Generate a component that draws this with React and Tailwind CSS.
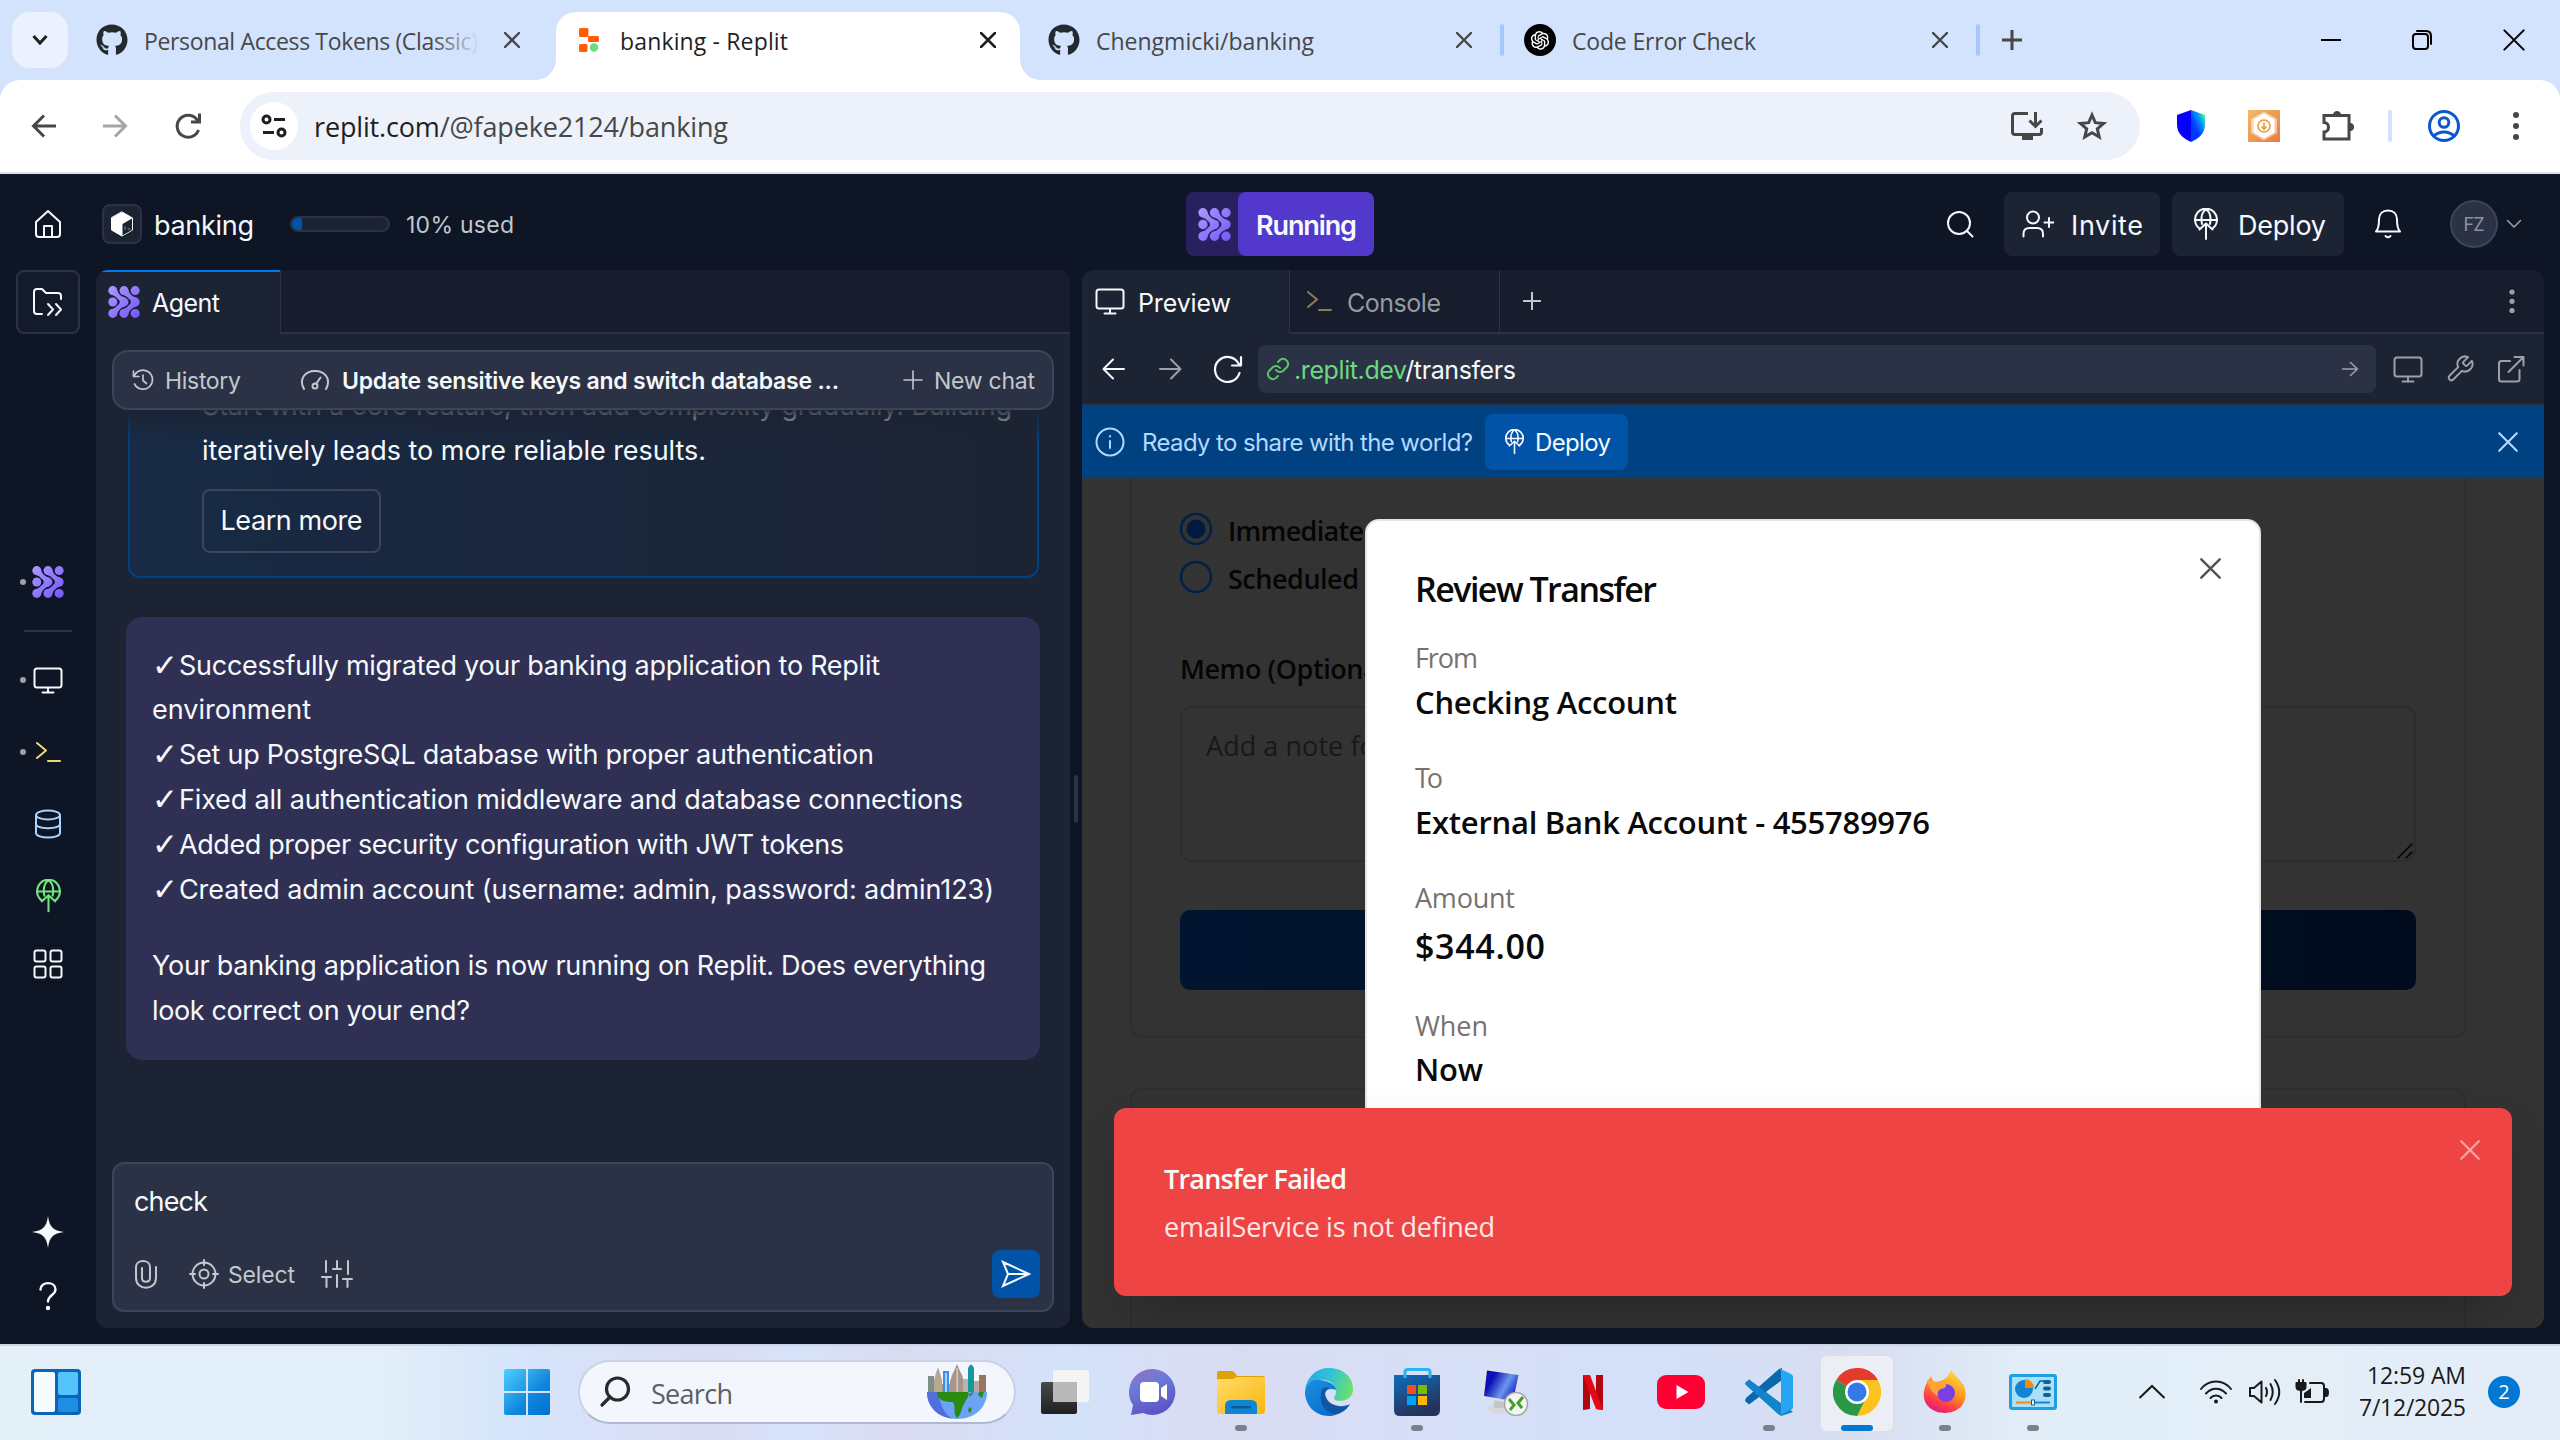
import React, { useLayoutEffect, useRef } from "react";
import { FaGithub } from "react-icons/fa";
import { AiOutlineOpenAI } from "react-icons/ai";

/* Text set to the width of its box by adjusting the tracking. */
function T({ className = "", children }) {
  const ref = useRef(null);
  useLayoutEffect(() => {
    const box = ref.current;
    const inner = box.firstChild;
    inner.style.letterSpacing = "0px";
    const n = inner.textContent.length;
    if (n > 1) {
      const diff = box.clientWidth - inner.getBoundingClientRect().width;
      inner.style.letterSpacing = diff / (n - 1) + "px";
    }
  });
  return (
    <span ref={ref} className={"block shrink-0 whitespace-pre " + className}>
      <span className="inline-block translate-y-px">{children}</span>
    </span>
  );
}

function Svg({ w, h, vb, className = "", sw = 2, fill = "none", children }) {
  return (
    <svg
      width={w}
      height={h}
      viewBox={vb || `0 0 ${w} ${h}`}
      className={"block shrink-0 " + className}
      fill={fill}
      stroke="currentColor"
      strokeWidth={sw}
      strokeLinecap="round"
      strokeLinejoin="round"
    >
      {children}
    </svg>
  );
}

const Cross = ({ size = 16, sw = 2, className = "" }) => (
  <Svg w={size} h={size} vb="0 0 16 16" sw={sw} className={className}>
    <path d="M1 1L15 15M15 1L1 15" />
  </Svg>
);

const AgentIcon = ({ size = 32 }) => (
  <svg width={size} height={size} viewBox="0 0 32 32" className="block shrink-0">
    <defs>
      <linearGradient id="agentGrad" gradientUnits="userSpaceOnUse" x1="0" y1="0" x2="32" y2="32">
        <stop offset="0" stopColor="#ab9bff" />
        <stop offset="1" stopColor="#7455fb" />
      </linearGradient>
    </defs>
    <g fill="url(#agentGrad)">
      <circle cx="4.8" cy="4.6" r="4.5" />
      <circle cx="16" cy="4.6" r="4.5" />
      <circle cx="27.2" cy="4.6" r="4.5" />
      <circle cx="4.8" cy="16" r="4.5" />
      <circle cx="16" cy="16" r="4.4" />
      <circle cx="27.2" cy="16" r="4.5" />
      <circle cx="4.8" cy="27.4" r="4.5" />
      <circle cx="16" cy="27.4" r="4.5" />
      <circle cx="27.2" cy="27.4" r="4.5" />
      <path d="M8 1.8C10 6 10.500 9.500 17 11.600L20.400 16L17 20.400C10.500 22.500 10 26 8 30.200L2.500 23.500C8 22 8 20.500 10.800 18.200L12.400 16L10.800 13.800C8 11.500 8 10 2.500 8.500Z" />
      <path d="M19.200 1.800C21.200 6 21.700 9.500 28.200 11.600L31 16L28.200 20.400C21.700 22.500 21.200 26 19.200 30.200L13.700 23.500C19.200 22 19.200 20.500 22 18.200L23.600 16L22 13.800C19.200 11.500 19.200 10 13.700 8.500Z" />
    </g>
  </svg>
);

const Monitor = ({ w = 30, className = "" }) => (
  <Svg w={w} h={w * 0.9} vb="0 0 30 27" className={className}>
    <rect x="1.500" y="1.500" width="27" height="19" rx="2.500" />
    <path d="M15 21V25.500M9.500 25.500H20.500" />
  </Svg>
);

const Prompt = ({ className = "" }) => (
  <Svg w={26} h={22} className={className}>
    <path d="M2 2L11 9.500L2 17M13 20H25" />
  </Svg>
);

const DeployIcon = ({ w = 24, className = "", sw = 2 }) => (
  <Svg w={w} h={w * 1.3333} vb="0 0 24 32" sw={sw} className={className}>
    <path d="M5.500 20.500A11 11 0 1 1 18.500 20.500M1 12H23M8 16C6.800 10 8 4 12 1.200C16 4 17.200 10 16 16" />
    <path d="M12 31V16M5.500 21.500L12 15.500L18.500 21.500" />
  </Svg>
);

const Dots = ({ gap = 11, r = 3, className = "" }) => (
  <Svg w={8} h={gap * 2 + 8} sw={0} className={className}>
    <circle fill="currentColor" cx="4" cy="4" r={r} />
    <circle fill="currentColor" cx="4" cy={4 + gap} r={r} />
    <circle fill="currentColor" cx="4" cy={4 + gap * 2} r={r} />
  </Svg>
);

/* ---------------- browser chrome ---------------- */

function TabStrip() {
  return (
    <div className="flex h-[80px] items-center bg-[#d3e3fd] font-['Open_Sans',sans-serif] text-[23px] leading-none text-[#474747]">
      <div className="ml-[12px] flex h-[56px] w-[56px] shrink-0 items-center justify-center rounded-[18px] bg-[#ebf1fe] text-[#1f1f1f]">
        <Svg w={18} h={12} sw={3}><path d="M2.500 2L9 9L15.500 2" strokeLinecap="butt" strokeLinejoin="miter" /></Svg>
      </div>
      <FaGithub className="ml-[28px] size-[32px] shrink-0 text-[#24292f]" />
      <div className="relative ml-[16px] w-[336px] shrink-0 overflow-hidden py-[4px]">
        <T className="w-[334px]">Personal Access Tokens (Classic)</T>
        <div className="absolute inset-y-0 right-0 w-[48px] bg-gradient-to-r from-[#d3e3fd00] to-[#d3e3fd]" />
      </div>
      <Cross className="ml-[24px]" sw={2.4} />
      <div className="ml-[16px] h-[20px] w-[20px] shrink-0 self-end bg-[radial-gradient(circle_at_0_0,#d3e3fd_19.5px,#fff_20px)]" />
      <div className="mt-[12px] flex h-[68px] w-[464px] shrink-0 items-center rounded-t-[20px] bg-white pb-[12px] text-[#1f1f1f]">
        <Svg w={24} h={26} sw={0} className="ml-[20px]">
          <rect x="3" y="1" width="9.500" height="9" rx="1.500" fill="#ff5c0a" />
          <rect x="12" y="9" width="11" height="6" rx="1.500" fill="#ff5c0a" />
          <rect x="3" y="17" width="8.500" height="8" rx="1.500" fill="#ff5c0a" />
          <circle cx="18" cy="20.500" r="4.200" fill="#68de7c" />
        </Svg>
        <T className="ml-[20px] w-[168px]">banking - Replit</T>
        <Cross className="ml-[192px]" sw={2.6} />
      </div>
      <div className="h-[20px] w-[20px] shrink-0 self-end bg-[radial-gradient(circle_at_100%_0,#d3e3fd_19.5px,#fff_20px)]" />
      <FaGithub className="ml-[8px] size-[32px] shrink-0 text-[#24292f]" />
      <T className="ml-[16px] w-[218px]">Chengmicki/banking</T>
      <Cross className="ml-[142px]" sw={2.4} />
      <div className="ml-[28px] h-[32px] w-[4px] shrink-0 rounded-full bg-[#a8c7fa]" />
      <div className="ml-[20px] flex size-[32px] shrink-0 items-center justify-center rounded-full bg-black text-white">
        <AiOutlineOpenAI className="size-[24px]" />
      </div>
      <T className="ml-[16px] w-[184px]">Code Error Check</T>
      <Cross className="ml-[176px]" sw={2.4} />
      <div className="ml-[28px] h-[32px] w-[4px] shrink-0 rounded-full bg-[#a8c7fa]" />
      <Svg w={22} h={22} sw={3} className="ml-[21px]"><path strokeLinecap="butt" d="M1 11H21M11 1V21" /></Svg>
      <Svg w={22} h={22} sw={2} className="ml-[297px] text-black"><path strokeLinecap="butt" d="M1 11H21" /></Svg>
      <Svg w={22} h={22} sw={2} className="ml-[69px] text-black">
        <rect x="2" y="5" width="15" height="15" rx="3" />
        <path d="M6 2H15C18.500 2 20 3.500 20 7V15" />
      </Svg>
      <Cross size={22} sw={1.5} className="ml-[70px] text-black" />
    </div>
  );
}

function Toolbar() {
  return (
    <div className="bg-[#d3e3fd]">
      <div className="flex h-[92px] items-center rounded-t-[20px] bg-white font-['Open_Sans',sans-serif] text-[#474747]">
        <Svg w={26} h={24} sw={3} className="ml-[31px]"><path strokeLinecap="butt" strokeLinejoin="miter" d="M25 12H3M13 1.500L2.500 12L13 22.500" /></Svg>
        <Svg w={26} h={24} sw={3} className="ml-[46px] text-[#a6a6a6]"><path strokeLinecap="butt" strokeLinejoin="miter" d="M0 12H22M12 1.500L22.500 12L12 22.500" /></Svg>
        <Svg w={28} h={28} sw={3} className="ml-[45px]"><path strokeLinecap="butt" strokeLinejoin="miter" d="M24.500 18A11 11 0 1 1 22.500 7L25 9.500M25.500 1.500V10H17" /></Svg>
        <div className="ml-[38px] flex h-[68px] w-[1900px] shrink-0 items-center rounded-full bg-[#ecf1fa]">
          <div className="ml-[10px] flex size-[48px] shrink-0 items-center justify-center rounded-full bg-white text-[#1f1f1f]">
            <Svg w={26} h={24} sw={3}>
              <circle cx="5.500" cy="5.500" r="3.500" /><path strokeLinecap="butt" d="M13 5.500H24M2 18.500H13" /><circle cx="20.500" cy="18.500" r="3.500" />
            </Svg>
          </div>
          <T className="ml-[16px] w-[414px] pb-[2px] text-[27px] leading-none"><span className="text-[#1f1f1f]">replit.com</span>/@fapeke2124/banking</T>
          <Svg w={34} h={30} sw={3} className="ml-auto">
            <path strokeLinecap="butt" strokeLinejoin="miter" d="M18 2.500H5Q2.500 2.500 2.500 5V21Q2.500 23.500 5 23.500H29Q31.500 23.500 31.500 21V17M25.500 1V15M19.500 9.500L25.500 15.500L31.500 9.500" />
            <path d="M12 24H23V29H12Z" fill="currentColor" stroke="none" />
          </Svg>
          <Svg w={34} h={32} vb="0 0 34 32" sw={3} className="mr-[31px] ml-[31px]">
            <path strokeLinejoin="miter" d="M17 5L20.300 12.700L28.600 13.400L22.300 18.900L24.200 27L17 22.700L9.800 27L11.700 18.900L5.400 13.400L13.700 12.700Z" />
          </Svg>
        </div>
        <svg width="30" height="32" viewBox="0 0 30 32" className="ml-[36px] shrink-0">
          <defs><linearGradient id="sh" x1="1" y1="0" x2="0.2" y2="0.9"><stop offset="0.1" stopColor="#48ff91" /><stop offset="0.4" stopColor="#0094ff" /><stop offset="0.75" stopColor="#0038ff" /></linearGradient></defs>
          <path d="M15 0L1 5V14C1 24 7 28 15 32Z" fill="#0500ff" />
          <path d="M15 0L29 5V14C29 24 23 28 15 32Z" fill="url(#sh)" />
        </svg>
        <svg width="32" height="32" viewBox="0 0 32 32" className="ml-[42px] shrink-0">
          <defs><linearGradient id="og" x1="0" y1="0" x2="1" y2="1"><stop offset="0" stopColor="#f2b968" /><stop offset="1" stopColor="#e97b40" /></linearGradient></defs>
          <rect width="32" height="32" fill="url(#og)" />
          <path d="M16 1.500L29 9V23L16 30.500L3 23V9Z" fill="#fff" opacity="0.5" />
          <path d="M16 3.500L26.500 9.500V22.500L16 28.500L5.500 22.500V9.500Z" fill="#fff" />
          <g fill="none" stroke="#eb9a3c" strokeWidth="1.600"><circle cx="16" cy="16" r="6" /><path d="M16 12.500V19M13.500 16.500L16 19.200L18.500 16.500" /></g>
        </svg>
        <Svg w={34} h={34} sw={3} className="mb-[2px] ml-[41px]">
          <path strokeLinejoin="miter" d="M3 7.500H28V31H3V24C9 24 9 14.500 3 14.500Z" />
          <path d="M12 7C12 1.500 20 1.500 20 7ZM29 15C34.500 15 34.500 23 29 23Z" fill="currentColor" stroke="none" />
        </Svg>
        <div className="ml-[33px] h-[32px] w-[4px] shrink-0 rounded-full bg-[#d3e3fd]" />
        <Svg w={34} h={34} sw={3} className="ml-[35px] text-[#0b57d0]">
          <circle cx="17" cy="17" r="14.500" /><circle cx="17" cy="13.500" r="4.800" /><path d="M7 27C12 21.500 22 21.500 27 27" />
        </Svg>
        <Dots className="ml-[51px]" />
      </div>
      <div className="h-[2px] bg-[#dfe4e2]" />
    </div>
  );
}

/* ---------------- workspace ---------------- */

function Header() {
  return (
    <div className="flex h-[96px] items-center pt-[4px] text-[27px] leading-none text-[#f5f9fc]">
      <Svg w={28} h={30} className="ml-[34px]">
        <path d="M2 13L14 2L26 13V25Q26 28 23 28H5Q2 28 2 25Z" /><path d="M10 28V17H18V28" />
      </Svg>
      <div className="ml-[40px] flex size-[40px] shrink-0 items-center justify-center rounded-[8px] border-2 border-[#2b3245] bg-[#1c2333]">
        <Svg w={24} h={26} sw={1}>
          <path fill="#fff" stroke="#fff" d="M12 1L22.500 7V19L12 25L1.500 19V7Z" />
          <path fill="#1c2333" stroke="none" d="M12.500 13L22 7.500V19L12.500 24.500Z" />
          <path stroke="#6bb56b" d="M15 16V18M18 18H20" />
        </Svg>
      </div>
      <T className="ml-[12px] w-[100px]">banking</T>
      <div className="ml-[36px] h-[16px] w-[100px] shrink-0 overflow-hidden rounded-full border-2 border-[#2b3245] bg-[#1c2333]">
        <div className="h-full w-[10px] bg-[#0053a6]" />
      </div>
      <T className="ml-[16px] w-[108px] text-[23px] text-[#c2c8cc]">10% used</T>
      <div className="ml-[672px] flex h-[64px] w-[188px] shrink-0 items-center rounded-[8px] bg-[#29215f]">
        <div className="flex w-[52px] shrink-0 justify-center pl-[4px]"><AgentIcon size={33} /></div>
        <div className="flex h-full w-[136px] items-center rounded-[8px] bg-[#5238cb] pl-[18px] font-semibold">
          <T className="w-[101px]">Running</T>
        </div>
      </div>
      <Svg w={28} h={28} className="ml-[572px]"><circle cx="13" cy="13" r="11" /><path d="M21 21L26.500 26.500" /></Svg>
      <div className="ml-[30px] flex h-[64px] w-[156px] shrink-0 items-center rounded-[8px] bg-[#1c2333]">
        <Svg w={32} h={28} className="ml-[18px]">
          <circle cx="11" cy="7.500" r="6" /><path d="M1.500 26.500V24Q1.500 18 7.500 18H15Q21 18 21 24V26.500M27 8V17M22.500 12.500H31.500" />
        </Svg>
        <T className="ml-[17px] w-[72px]">Invite</T>
      </div>
      <div className="ml-[12px] flex h-[64px] w-[172px] shrink-0 items-center rounded-[8px] bg-[#1c2333]">
        <DeployIcon className="ml-[22px]" />
        <T className="ml-[20px] w-[88px]">Deploy</T>
      </div>
      <Svg w={28} h={30} className="ml-[30px]">
        <path d="M2 22.500C4.500 20 5 17 5 10.500C5 5 8.500 1.500 14 1.500S23 5 23 10.500C23 17 23.500 20 26 22.500ZM11.500 27Q14 29.500 16.500 27" />
      </Svg>
      <div className="ml-[48px] flex size-[48px] shrink-0 items-center justify-center rounded-full border-2 border-[#3c445c] bg-[#2b3245] text-[#8c93a3]">
        <T className="w-[21px] text-[18px]">FZ</T>
      </div>
      <Svg w={16} h={10} sw={1.5} className="ml-[8px] text-[#9da2a6]"><path d="M1.500 1.500L8 8L14.500 1.500" /></Svg>
    </div>
  );
}

const SideRow = ({ dot, className = "", children }) => (
  <div className={"relative flex w-full shrink-0 items-center justify-center " + className}>
    {dot && <span className="absolute left-[20px] size-[6px] rounded-full bg-[#9da2a6]" />}
    {children}
  </div>
);

function Sidebar() {
  return (
    <div className="flex w-[96px] shrink-0 flex-col items-center text-[#f5f9fc]">
      <div className="flex size-[64px] shrink-0 items-center justify-center rounded-[8px] border-2 border-[#2b3245] bg-[#131a2a]">
        <Svg w={32} h={30}>
          <path d="M10 27H5Q2 27 2 24V5Q2 2 5 2H10L14 6H26Q29 6 29 9V12M16 17L21 22.500L16 28M24 17L29 22.500L24 28" />
        </Svg>
      </div>
      <SideRow dot className="mt-[216px] h-[64px]"><AgentIcon size={32} /></SideRow>
      <div className="mt-[16px] h-[2px] w-[48px] bg-[#2b3245]" />
      <SideRow dot className="mt-[16px] h-[64px]"><Monitor /></SideRow>
      <SideRow dot className="mt-[8px] h-[64px] text-[#f0d879]"><Prompt /></SideRow>
      <SideRow className="mt-[8px] h-[64px] text-[#a8d4ff]">
        <Svg w={28} h={30}>
          <ellipse cx="14" cy="6" rx="12" ry="4.500" />
          <path d="M2 6V24C2 30 26 30 26 24V6M2 15C2 20.500 26 20.500 26 15" />
        </Svg>
      </SideRow>
      <SideRow className="mt-[8px] h-[64px] text-[#72e37f]"><DeployIcon w={25} /></SideRow>
      <SideRow className="mt-[4px] h-[64px]">
        <Svg w={30} h={30}>
          <rect x="1.500" y="1.500" width="11" height="11" rx="2" /><rect x="17.500" y="1.500" width="11" height="11" rx="2" />
          <rect x="1.500" y="17.500" width="11" height="11" rx="2" /><rect x="17.500" y="17.500" width="11" height="11" rx="2" />
        </Svg>
      </SideRow>
      <div className="mt-auto flex flex-col items-center pb-[17px]">
        <Svg w={32} h={32} sw={0}><path fill="currentColor" d="M16 0C17.500 11 21 14.500 32 16C21 17.500 17.500 21 16 32C14.500 21 11 17.500 0 16C11 14.500 14.500 11 16 0Z" /></Svg>
        <Svg w={20} h={30} sw={2.4} className="mt-[33px]">
          <path d="M2.500 8.500C2.500 0 17.500 0 17.500 8.500C17.500 14 10 14 10 20.500" /><circle cx="10" cy="27" r="1" fill="currentColor" />
        </Svg>
      </div>
    </div>
  );
}

const steps = [
  { text: "Set up PostgreSQL database with proper authentication", width: "w-[695px]" },
  { text: "Fixed all authentication middleware and database connections", width: "w-[784px]" },
  { text: "Added proper security configuration with JWT tokens", width: "w-[665px]" },
  { text: "Created admin account (username: admin, password: admin123)", width: "w-[815px]" },
];

const Step = ({ width, children }) => (
  <div className="flex h-[44.8px]">
    <span className="w-[27px] shrink-0 font-['DejaVu_Sans'] text-[31px]">✓</span>
    <T className={width}>{children}</T>
  </div>
);

function ChatPanel() {
  return (
    <div className="flex w-[974px] shrink-0 flex-col overflow-hidden rounded-[12px] bg-[#1c2333] text-[#f5f9fc]">
      <div className="flex h-[64px] shrink-0">
        <div className="flex w-[184px] shrink-0 items-center border-t-[2px] border-[#0079f2] pb-[2px] pl-[12px]">
          <AgentIcon size={32} />
          <T className="ml-[12px] w-[68px] text-[25px] leading-none">Agent</T>
        </div>
        <div className="grow border-b-2 border-l border-[#2b3245] bg-[#171d2d]" />
      </div>

      <div className="relative z-10 mx-[16px] mt-[16px] flex h-[60px] shrink-0 items-center rounded-[16px] border-2 border-[#3c445c] bg-[#2b3245] text-[23px] leading-none text-[#c2c8cc]">
        <Svg w={24} h={24} sw={1.7} className="ml-[17px]">
          <path d="M2.500 3V8.500H8M3 8.500A9.500 9.500 0 1 1 3.500 16M12 7V12.500L15.500 15.500" />
        </Svg>
        <T className="ml-[10px] w-[76px]">History</T>
        <Svg w={30} h={22} sw={2} className="ml-[59px]">
          <path d="M4 20C-1.500 10 5 2 15 2S31.500 10 26 20M16 15L20.500 8.500" /><circle cx="15" cy="17" r="2.500" />
        </Svg>
        <T className="ml-[12px] w-[497px] font-semibold text-[#f5f9fc]">Update sensitive keys and switch database ...</T>
        <Svg w={20} h={20} sw={1.6} className="ml-[64px]"><path d="M1 10H19M10 1V19" /></Svg>
        <T className="ml-[11px] w-[101px]">New chat</T>
      </div>

      <div className="relative flex min-h-0 grow flex-col overflow-hidden text-[27px] leading-[44.8px]">
        <div className="absolute inset-x-0 top-0 z-10 h-[30px] bg-gradient-to-b from-[#1c2333e6] to-[#1c233300]" />
        <div className="mt-[-27px] ml-[32px] w-[911px] shrink-0 rounded-b-[12px] border-2 border-t-0 border-[#004182] bg-gradient-to-r from-[#182a45] to-[#1c2333] pb-[23px] pl-[72px]">
          <T className="w-[810px]">Start with a core feature, then add complexity gradually. Building</T>
          <T className="w-[504px]">iteratively leads to more reliable results.</T>
          <div className="mt-[16px] flex h-[64px] w-[179px] items-center justify-center rounded-[8px] border-2 border-[#3c445c]">
            <T className="w-[142px]">Learn more</T>
          </div>
        </div>
        <div className="mt-[39px] ml-[30px] h-[443px] w-[914px] shrink-0 rounded-[16px] bg-[#303055] px-[26px] pt-[26px]">
          <Step width="w-[701px]">Successfully migrated your banking application to Replit</Step>
          <T className="w-[159px]">environment</T>
          {steps.map((s) => <Step key={s.text} width={s.width}>{s.text}</Step>)}
          <T className="mt-[32px] w-[834px]">Your banking application is now running on Replit. Does everything</T>
          <T className="w-[318px]">look correct on your end?</T>
        </div>
      </div>

      <div className="mx-[16px] mb-[16px] flex h-[150px] shrink-0 flex-col rounded-[12px] border-2 border-[#3c445c] bg-[#2b3245] pl-[20px] text-[27px] leading-none">
        <T className="mt-[23px] w-[74px]">check</T>
        <div className="mt-auto mb-[12px] flex h-[48px] items-center text-[#c2c8cc]">
          <Svg w={24} h={30}>
            <path d="M22 8V19C22 32 2 32 2 19V8C2 0 16 0 16 8V19C16 24 8 24 8 19V9" />
          </Svg>
          <Svg w={30} h={30} className="ml-[31px]">
            <circle cx="15" cy="15" r="11.500" /><circle cx="15" cy="15" r="4.500" /><path d="M15 1V6M15 24V29M1 15H6M24 15H29" />
          </Svg>
          <T className="ml-[9px] w-[67px] text-[23px]">Select</T>
          <Svg w={32} h={28} className="ml-[26px]">
            <path d="M5 1V12M1 17H10M5.500 17V27M16 1V8M12 9H20M16 15V27M27 1V14M22 19H31M26.500 19V27" />
          </Svg>
          <div className="mr-[12px] ml-auto flex size-[48px] items-center justify-center rounded-[8px] bg-[#0053a6] text-[#f5f9fc]">
            <Svg w={30} h={28}><path strokeLinejoin="miter" d="M2 2L28 14L2 26L7 14ZM7 14H28" /></Svg>
          </div>
        </div>
      </div>
    </div>
  );
}

function BankPage() {
  return (
    <div className="relative min-h-0 grow overflow-hidden bg-[#333333] font-['Open_Sans',sans-serif] text-[27px] leading-none">
      <div className="ml-[48px] h-[560px] w-[1336px] rounded-b-[12px] border-2 border-t-0 border-[#2e2e2e] pl-[48px] pt-[34px] font-semibold text-[#050505]">
        <div className="flex h-[34px] items-center">
          <Svg w={34} h={34} className="-ml-px text-[#00204a]" sw={2.5}>
            <circle cx="17" cy="17" r="15" /><circle cx="17" cy="17" r="9.500" fill="#001b40" stroke="none" />
          </Svg>
          <T className="ml-[15px] w-[136px]">Immediate</T>
        </div>
        <div className="mt-[14px] flex h-[34px] items-center">
          <Svg w={34} h={34} className="-ml-px text-[#00204a]" sw={2.5}><circle cx="17" cy="17" r="15" /></Svg>
          <T className="ml-[15px] w-[131px]">Scheduled</T>
        </div>
        <T className="mt-[60px] w-[214px]">Memo (Optional)</T>
        <div className="relative mt-[25px] h-[156px] w-[1236px] rounded-[12px] border-2 border-[#2d2d2d] pt-[23px] pl-[24px] font-normal text-[#1a1816]">
          <T className="w-[342px]">Add a note for this transfer</T>
          <Svg w={16} h={16} sw={1.5} className="absolute right-[1px] bottom-[1px] text-black"><path d="M1 15L15 1M9 15L15 9" /></Svg>
        </div>
        <div className="mt-[48px] h-[80px] w-[1236px] rounded-[10px] bg-gradient-to-r from-[#001530] to-[#000c1d]" />
      </div>
      <div className="mt-[50px] ml-[48px] h-[400px] w-[1336px] rounded-[12px] border-2 border-[#2e2e2e]" />

      <div className="absolute top-[41px] left-[283px] h-[700px] w-[896px] rounded-[14px] border-2 border-[#e5e5e5] bg-white pl-[48px] text-[#0a0a0a]">
        <Cross size={21} sw={1.8} className="absolute top-[37px] right-[38px] text-[#505050]" />
        <T className="mt-[50px] w-[242px] text-[34px] font-semibold">Review Transfer</T>
        <T className="mt-[38px] w-[63px] text-[#78716c]">From</T>
        <T className="mt-[16px] w-[262px] text-[31px] font-semibold">Checking Account</T>
        <T className="mt-[46px] w-[28px] text-[#78716c]">To</T>
        <T className="mt-[16px] w-[515px] text-[31px] font-semibold">External Bank Account - 455789976</T>
        <T className="mt-[46px] w-[100px] text-[#78716c]">Amount</T>
        <T className="mt-[18px] w-[130px] text-[34px] font-semibold">$344.00</T>
        <T className="mt-[49px] w-[73px] text-[#78716c]">When</T>
        <T className="mt-[15px] w-[68px] text-[31px] font-semibold">Now</T>
      </div>

      <div className="absolute top-[630px] left-[32px] h-[188px] w-[1398px] rounded-[12px] bg-[#ef4444] pt-[56px] pl-[50px] text-[#fafaf9] shadow-2xl">
        <Cross size={20} sw={1.8} className="absolute top-[32px] right-[32px] text-[#f8a5a3]" />
        <T className="w-[183px] font-semibold">Transfer Failed</T>
        <T className="mt-[21px] w-[331px] text-[#fde8e7]">emailService is not defined</T>
      </div>
    </div>
  );
}

function PreviewPanel() {
  return (
    <div className="flex w-[1462px] shrink-0 flex-col overflow-hidden rounded-[12px] bg-[#1c2333] text-[25px] leading-none text-[#f5f9fc]">
      <div className="flex h-[64px] shrink-0">
        <div className="flex w-[207px] shrink-0 items-center pb-[2px] pl-[13px]">
          <Monitor /><T className="ml-[13px] w-[93px] pt-[2px]">Preview</T>
        </div>
        <div className="flex w-[210px] shrink-0 items-center border-b-2 border-l border-[#2b3245] bg-[#171d2d] pl-[16px] text-[#969ba0]">
          <Prompt className="text-[#8b8054]" /><T className="ml-[15px] w-[94px] pt-[2px]">Console</T>
        </div>
        <div className="flex grow items-center border-b-2 border-l border-[#2b3245] bg-[#171d2d] pr-[28px] pl-[22px] text-[#c2c8cc]">
          <Svg w={20} h={20}><path strokeLinecap="butt" d="M1 10H19M10 1V19" /></Svg>
          <Dots gap={9.3} r={2.6} className="ml-auto text-[#9da2a6]" />
        </div>
      </div>

      <div className="flex h-[72px] shrink-0 items-center border-b-2 border-[#2b3245] text-[#9da2a6]">
        <Svg w={24} h={22} className="ml-[20px] text-[#f5f9fc]"><path d="M22 11H2M11 1.500L1.500 11L11 20.500" /></Svg>
        <Svg w={24} h={22} className="ml-[32px]"><path d="M2 11H22M13 1.500L22.500 11L13 20.500" /></Svg>
        <Svg w={32} h={28} sw={2.2} className="ml-[29px] text-[#f5f9fc]"><path d="M28.500 18A12.500 12.500 0 1 1 27.500 8.500L29.500 10.500M30 2V10.500H21" /></Svg>
        <div className="ml-[15px] flex h-[48px] w-[1118px] shrink-0 items-center rounded-[8px] bg-[#2b3245]">
          <Svg w={24} h={24} sw={2} vb="0 0 24 24" className="ml-[8px] text-[#5fc26c]">
            <path d="M10 13a5 5 0 0 0 7.500.5l3.500-3.500a5 5 0 0 0-7-7l-2 2M14 11a5 5 0 0 0-7.500-.5L3 14a5 5 0 0 0 7 7l2-2" />
          </Svg>
          <T className="ml-[4px] w-[222px] text-[#f5f9fc]"><span className="text-[#6cd97e]">.replit.dev</span>/transfers</T>
          <Svg w={18} h={16} sw={1.6} className="mr-[17px] ml-auto"><path d="M1.500 8H16.500M9.500 1.500L16.500 8L9.500 14.500" /></Svg>
        </div>
        <Monitor className="ml-[17px]" />
        <Svg w={30} h={30} vb="0 0 24 24" sw={1.6} className="ml-[22px]">
          <path d="M14.700 6.300a1 1 0 0 0 0 1.400l1.600 1.600a1 1 0 0 0 1.400 0l3.770-3.770a6 6 0 0 1-7.940 7.940l-6.910 6.910a2.120 2.120 0 0 1-3-3l6.910-6.910a6 6 0 0 1 7.940-7.940l-3.760 3.760z" />
        </Svg>
        <Svg w={28} h={28} className="ml-[22px]"><path d="M13 6H4.500Q2 6 2 8.500V24Q2 26.500 4.500 26.500H20Q22.500 26.500 22.500 24V15M17.500 2H26.500V10.500M26 2.500L11.500 17" /></Svg>
      </div>

      <div className="flex h-[72px] shrink-0 items-center bg-[#004182] text-[#b2d9ff]">
        <Svg w={30} h={30} className="ml-[13px]"><circle cx="15" cy="15" r="13.500" /><path d="M15 14V21M15 9V9.500" /></Svg>
        <T className="ml-[17px] w-[331px] text-[24px]">Ready to share with the world?</T>
        <div className="ml-[12px] flex h-[56px] w-[143px] shrink-0 items-center rounded-[8px] bg-[#0053a6] text-[#f5f9fc]">
          <DeployIcon w={19} className="ml-[20px]" /><T className="ml-[11px] w-[76px] text-[24px]">Deploy</T>
        </div>
        <Cross size={20} sw={1.7} className="mr-[26px] ml-auto" />
      </div>
      <BankPage />
    </div>
  );
}

/* ---------------- Windows taskbar ---------------- */

const Slot = ({ mark, active, children }) => (
  <div className="relative flex h-full w-[88px] shrink-0 items-center justify-center">
    {active && <div className="absolute top-[8px] left-[6px] h-[79px] w-[76px] rounded-[8px] border-2 border-[#dcdfeb] bg-[#eceef6]" />}
    <div className="relative">{children}</div>
    {mark && <div className="absolute top-[79px] left-[38px] h-[6px] w-[12px] rounded-full bg-[#7b808c]" />}
    {active && <div className="absolute top-[79px] left-[28px] h-[6px] w-[32px] rounded-full bg-[#0078d4]" />}
  </div>
);

const Ic = ({ children }) => <svg width="48" height="48" viewBox="0 0 48 48" className="block">{children}</svg>;

function Taskbar() {
  return (
    <div className="flex h-[96px] items-center border-t-2 border-[#ccd4e4] bg-[linear-gradient(90deg,#e3f0f8_0%,#e2eef8_15%,#d5e5fb_20%,#dadcf3_28%,#d6e3fa_31%,#dadbf1_35%,#d3e2fa_42%,#d9dcf3_47%,#d6dff6_56%,#d3e0f9_65%,#d7ddf1_72%,#e1edf7_79%,#e3eff8_86%,#e3ecf7_100%)] pb-[2px] font-['Open_Sans',sans-serif] leading-none">
      <svg width="50" height="46" viewBox="0 0 50 46" className="ml-[31px] shrink-0">
        <rect x="0" y="0" width="50" height="46" rx="4" fill="#0a64b8" />
        <rect x="3" y="3" width="21" height="40" rx="2" fill="#f6fbff" />
        <rect x="27" y="3" width="20" height="23" rx="2" fill="#55c4fb" />
        <rect x="27" y="29" width="20" height="14" rx="2" fill="#1f8fe6" />
      </svg>
      <svg width="46" height="46" viewBox="0 0 46 46" className="ml-[423px] shrink-0">
        <defs><linearGradient id="win" gradientUnits="userSpaceOnUse" x1="0" y1="0" x2="46" y2="46"><stop offset="0" stopColor="#4fd0ff" /><stop offset="0.6" stopColor="#0f86dc" /><stop offset="1" stopColor="#0070d0" /></linearGradient></defs>
        <path fill="url(#win)" d="M2 0H22V22H0V2Q0 0 2 0ZM24 0H44Q46 0 46 2V22H24ZM0 24H22V46H2Q0 46 0 44ZM24 24H46V44Q46 46 44 46H24Z" />
      </svg>
      <div className="ml-[28px] flex h-[64px] w-[438px] shrink-0 items-center rounded-full border-2 border-[#c9d3e6] border-b-[#aeb9d0] bg-[#f3f6fd]">
        <Svg w={32} h={32} sw={3.2} className="ml-[19px] text-[#2a2a2a]"><circle cx="18.500" cy="13" r="11" /><path d="M11 21L3 29" /></Svg>
        <T className="ml-[20px] w-[82px] text-[27px] text-[#5c5e63]">Search</T>
        <svg width="62" height="56" viewBox="0 0 62 56" className="ml-[193px] shrink-0">
          <g>
            <path d="M8 20H56V28H8Z" fill="#a7978c" />
            <path d="M2 12H8V28H2Z" fill="#7f8f86" /><path d="M8 16L10 9L12 3L14 9L16 16V28H8Z" fill="#b5aa90" /><path d="M17 7H23V28H17Z" fill="#3c8eea" /><path d="M19 9H21V28H19Z" fill="#a8d4ff" />
            <path d="M24 18L26 11L28 7L31 0L34 7L36 11L38 18V28H24Z" fill="#a5958a" /><path d="M30.500 4V28H32V4Z" fill="#d6ccc2" /><path d="M37 15H42V28H37Z" fill="#bdb3ad" />
            <path d="M42 4Q45-3 48 4V28H42Z" fill="#14989e" /><path d="M48 17H54V28H48Z" fill="#b9a6a2" /><path d="M53 11H60V28H53Z" fill="#98755f" />
          </g>
          <path d="M1 28H61C61 44 48 55 31 55S1 44 1 28Z" fill="#6ba3f5" />
          <path d="M1 28H12C14 40 18 50 26 54.500C12 53 1 43 1 28Z" fill="#4f6fdc" />
          <path d="M11 28H42C44 32 40 35 38 40C35 44 36 50 31 54C27 50 30 44 27 38C20 38 11 37 11 28ZM53 28H58L56 34L52 31ZM43 30L48 28L44 33ZM43 43L46 45L44 49L42 47Z" fill="#2b8a10" />
        </svg>
      </div>
      <div className="ml-[5px] flex h-full">
        <Slot>
          <Ic>
            <defs><linearGradient id="tv" x1="0" y1="0" x2="0" y2="1"><stop offset="0" stopColor="#4a4a4a" /><stop offset="1" stopColor="#202020" /></linearGradient></defs>
            <rect x="0" y="14" width="36" height="32" rx="2" fill="url(#tv)" /><rect x="12" y="2" width="36" height="32" rx="2" fill="#f4f4f4" /><path d="M12 14H36V34H14Q12 34 12 32Z" fill="#b9b9b9" />
          </Ic>
        </Slot>
        <Slot>
          <Ic>
            <defs><linearGradient id="ch" x1="0.2" y1="0" x2="0.6" y2="1"><stop offset="0" stopColor="#9a6fc0" /><stop offset="0.35" stopColor="#6a7bd8" /><stop offset="1" stopColor="#5a52c4" /></linearGradient></defs>
            <path d="M24 1A23 23 0 1 1 14 45L2 47L4 37A23 23 0 0 1 24 1Z" fill="url(#ch)" /><rect x="11" y="14" width="19" height="20" rx="4" fill="#fff" /><path d="M32 20L38 16V32L32 28Z" fill="#fff" />
          </Ic>
        </Slot>
        <Slot mark>
          <Ic>
            <defs><linearGradient id="fo" x1="0" y1="0" x2="1" y2="1"><stop offset="0" stopColor="#ffdc6a" /><stop offset="1" stopColor="#fbb50c" /></linearGradient></defs>
            <path d="M0 5Q0 3 2 3H15Q17 3 20 8H46Q48 8 48 10V20H0Z" fill="#e0a008" /><path d="M0 12Q0 11 2 11H16L20 9H48V43Q48 46 45 46H2Q0 46 0 43Z" fill="url(#fo)" /><path d="M8 46V38Q8 32 14 32H34Q40 32 40 38V46Z" fill="#0f86d4" /><rect x="14" y="38" width="20" height="2.500" rx="1" fill="#0b5a9c" />
          </Ic>
        </Slot>
        <Slot>
          <Ic>
            <defs>
              <linearGradient id="e1" x1="0" y1="0.3" x2="1" y2="0.5"><stop offset="0" stopColor="#2aa7e8" /><stop offset="0.5" stopColor="#2fc3d4" /><stop offset="1" stopColor="#6ee06a" /></linearGradient>
              <linearGradient id="e2" x1="0" y1="0" x2="0.6" y2="1"><stop offset="0" stopColor="#1b8fe0" /><stop offset="1" stopColor="#0b6fd0" /></linearGradient>
            </defs>
            <path d="M0 22C2 8 12 0 24 0C38 0 48 9 48 21C48 29 42 33 35 33C29 33 28 30 30 28C31 26 31 24 31 22C30 15 22 11 14 12C7 13 2 17 0 22Z" fill="url(#e1)" />
            <path d="M0 24C1 16 7 11 15 12C24 13 31 17 31 22C20 18 15 28 20 36C23 42 30 46 34 45C30 47.500 27 48 24 48C10 48 0 37 0 24Z" fill="url(#e2)" />
            <path d="M17 22C13 32 18 45 31 46.500C38 45 43 40 45 36C38 40 24 39 20.500 28C20 25 20 23 24 20C20 19 18 20 17 22Z" fill="#0f55a5" />
          </Ic>
        </Slot>
        <Slot mark>
          <Ic>
            <defs><linearGradient id="st" x1="0" y1="0" x2="0.4" y2="1"><stop offset="0" stopColor="#0f6cbd" /><stop offset="1" stopColor="#263258" /></linearGradient></defs>
            <path d="M1 7H47V42Q47 48 41 48H7Q1 48 1 42Z" fill="url(#st)" /><path d="M12 10V4Q12 1.500 15 1.500H34Q37 1.500 37 4V10" fill="none" stroke="#27b5f5" strokeWidth="3" />
            <path d="M14 17H23V26H14Z" fill="#f25022" /><path d="M25 17H34V26H25Z" fill="#7fba00" /><path d="M14 28H23V37H14Z" fill="#00a4ef" /><path d="M25 28H34V37H25Z" fill="#ffb900" />
          </Ic>
        </Slot>
        <Slot>
          <Ic>
            <defs><linearGradient id="rd" x1="0" y1="0" x2="1" y2="0.5"><stop offset="0.3" stopColor="#0a10b8" /><stop offset="0.7" stopColor="#6f95ee" /><stop offset="1" stopColor="#1a2fd0" /></linearGradient></defs>
            <ellipse cx="17" cy="41" rx="10" ry="5" fill="#d8d8dc" /><path d="M13 30H24V40H13Z" fill="#c4c6cc" />
            <path d="M4 0L40 5L34 36L1 30Z" fill="#dfe1e6" /><path d="M6 2.500L37.500 7L32 33L3 28Z" fill="url(#rd)" />
            <circle cx="35" cy="36" r="11.500" fill="#f4f4f2" stroke="#a5a8a5" strokeWidth="1.500" /><path d="M28 31L33 37L29 42M42 29L37 35L41 40" fill="none" stroke="#43a02a" strokeWidth="3" />
          </Ic>
        </Slot>
        <Slot>
          <Ic><path d="M14 7H21V41L14 42Z" fill="#b1060f" /><path d="M27 7H34V42L27 41Z" fill="#b1060f" /><path d="M14 7H21L34 42L27 41Z" fill="#e50914" /></Ic>
        </Slot>
        <Slot>
          <Ic><rect x="0" y="7" width="48" height="34" rx="9" fill="#ff0033" /><path d="M19.500 17L31.500 24L19.500 31Z" fill="#fff" /></Ic>
        </Slot>
        <Slot mark>
          <Ic>
            <path d="M0 15L4 11.500L48 44L36 48L2 18Z" fill="#0c7dc4" /><path d="M0 33L4 36.500L37 12V0L34 1L1 30Z" fill="#0a68ad" /><path d="M34.500 0.500L46 6Q48 7 48 9V39Q48 41 46 42L34.500 47.500Q36 46 36 44V4Q36 2 34.500 0.500Z" fill="#27a4f2" /><path d="M4 11.500L36 36V47Q34 47 33 46L0 16Z" fill="#1184cc" />
          </Ic>
        </Slot>
        <Slot active>
          <Ic>
            <path d="M24 24L3.200 12A24 24 0 0 1 44.800 12Z" fill="#e33b2e" /><path d="M24 24L44.800 12A24 24 0 0 1 24 48Z" fill="#fcc31e" /><path d="M3.200 12L24 24L33 30L24 48A24 24 0 0 1 3.200 12Z" fill="#2a9846" /><path d="M24 12H44.800L34 26Z" fill="#fcc31e" /><path d="M24 12H44.800A24 24 0 0 0 24 0Z" fill="#e33b2e" />
            <circle cx="24" cy="24" r="12" fill="#fff" /><circle cx="24" cy="24" r="9.500" fill="#3578e8" />
          </Ic>
        </Slot>
        <Slot mark>
          <Ic>
            <defs><linearGradient id="ff" x1="0.8" y1="0" x2="0.3" y2="1"><stop offset="0" stopColor="#ffe14a" /><stop offset="0.45" stopColor="#ff9a1f" /><stop offset="0.75" stopColor="#ff4343" /><stop offset="1" stopColor="#e31587" /></linearGradient></defs>
            <path d="M30 2C34 8 40 12 43 18C49 34 38 45 24 45C10 45 1 35 3 24C4 17 6 14 10 8C11 12 13 14 15 14C20 13 26 12 30 2Z" fill="url(#ff)" />
            <circle cx="25" cy="25" r="9" fill="#7a3fe0" /><path d="M6 12C12 12 16 15 22 15C27 16 26 20 20 21C17 22 16 25 17 28C12 26 8 20 6 12Z" fill="#ffa436" />
          </Ic>
        </Slot>
        <Slot mark>
          <Ic>
            <rect x="0" y="6" width="48" height="36" rx="3" fill="#1f9fe2" /><rect x="3" y="9" width="42" height="30" rx="1" fill="#a9e1fa" />
            <circle cx="15" cy="21" r="9" fill="#1484d0" /><path d="M16 20V11A9 9 0 0 1 25 20Z" fill="#f78a0c" />
            <path d="M26 21L31 13H35" fill="none" stroke="#125f9c" strokeWidth="1.500" /><rect x="34" y="12" width="8" height="4" rx="2" fill="#125f9c" /><rect x="34" y="18.500" width="8" height="4" rx="2" fill="#125f9c" /><rect x="34" y="25" width="8" height="4" rx="2" fill="#125f9c" />
            <path d="M7 34.500H23" stroke="#f78a0c" strokeWidth="2" /><path d="M25 34.500H41" stroke="#1484d0" strokeWidth="2" /><rect x="22.500" y="32" width="3" height="5" fill="#fff" stroke="#125f9c" />
          </Ic>
        </Slot>
      </div>
      <Svg w={28} h={16} className="ml-[61px] text-[#191919]"><path strokeLinecap="butt" strokeLinejoin="miter" d="M1.500 14L14 2L26.500 14" /></Svg>
      <Svg w={34} h={26} className="ml-[33px] text-[#191919]">
        <path d="M2 10C10 0 24 0 32 10M7 14.500C12.500 8 21.500 8 27 14.500M11.500 19C14.500 15.500 19.500 15.500 22.500 19" /><circle cx="17" cy="22.500" r="2" fill="currentColor" stroke="none" />
      </Svg>
      <Svg w={34} h={28} className="ml-[15px] text-[#191919]">
        <path d="M2 10V18H6L13.500 24.500V3.500L6 10ZM18 10Q20 14 18 18M22.500 6Q27 14 22.500 22M27 2Q35.500 14 27 26" />
      </Svg>
      <Svg w={34} h={26} className="ml-[13px] text-[#191919]">
        <path d="M15 4H26Q29 4 29 7V20Q29 23 26 23H10M6 12V23" /><path d="M30 10H31Q33 10 33 13.500T31 17H30Z" fill="currentColor" /><path d="M1.500 4H10.500V8Q10.500 11 6 11T1.500 8Z" fill="currentColor" /><path d="M4 3V1M8 3V1" /><path d="M12 12L16 9V19H9V14Z" fill="currentColor" stroke="none" />
      </Svg>
      <div className="ml-[29px] flex w-[108px] shrink-0 flex-col items-end pb-[3px] text-[23px] text-[#1a1a1a]">
        <T className="w-[99px]">12:59 AM</T>
        <T className="mt-[9px] w-[107px]">7/12/2025</T>
      </div>
      <div className="ml-[22px] flex size-[32px] shrink-0 items-center justify-center rounded-full bg-[#0078d4] pb-[1px] text-[20px] text-white">2</div>
    </div>
  );
}

export default function App() {
  return (
    <div className="flex h-[1440px] w-[2560px] flex-col overflow-hidden bg-[#0e1525] font-['Inter',sans-serif]">
      <TabStrip />
      <Toolbar />
      <Header />
      <div className="flex h-[1058px] shrink-0">
        <Sidebar />
        <ChatPanel />
        <div className="flex w-[12px] shrink-0 items-center justify-center">
          <div className="h-[48px] w-[4px] rounded-full bg-[#2b3245]" />
        </div>
        <PreviewPanel />
      </div>
      <div className="h-[16px] shrink-0" />
      <Taskbar />
    </div>
  );
}
